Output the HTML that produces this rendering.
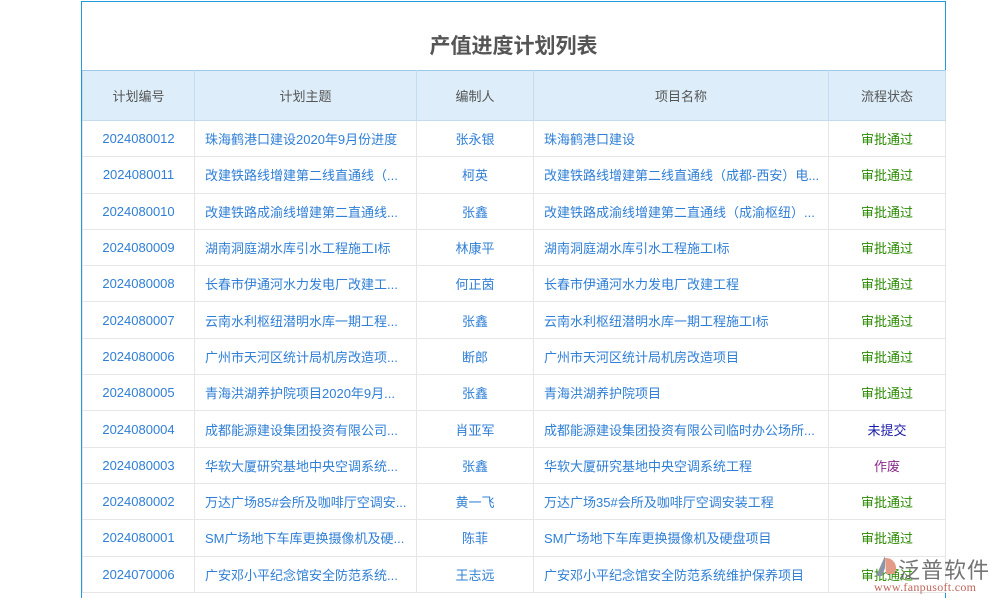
<!DOCTYPE html><html><head><meta charset="utf-8"><style>
body{margin:0;width:1000px;height:600px;background:#fff;font-family:"Liberation Sans","Noto Sans CJK SC",sans-serif;overflow:hidden;position:relative}
.box{position:absolute;left:81px;top:1px;width:863px;height:596px;border:1px solid #1e9be0;border-bottom:none;background:#fff}
.t{position:absolute;left:0;top:28px;width:100%;text-align:center;font-size:21px;font-weight:bold;color:#555}
table{position:absolute;left:0;top:68px;border-collapse:collapse;table-layout:fixed;width:863px}
th{height:49px;padding:0;background:#ddeefa;color:#555;font-weight:normal;font-size:13px;border:1px solid #c5dcee;border-top:1px solid #9cc9e8}
td{height:35.3px;border:1px solid #e6e6e6;color:#2f7fd6;font-size:13px;text-align:center;white-space:nowrap;overflow:hidden;padding:0}
td.l{text-align:left;padding-left:10px}
.g{color:#2a8a00}.b{color:#1a1aa8}.p{color:#8a2a8a}
.logo{position:absolute;left:898px;top:553px;font-size:22px;color:#666;letter-spacing:1px;opacity:.9}
.url{position:absolute;left:874px;top:580px;font-size:12px;color:#c0665a;font-family:"Liberation Serif",serif;letter-spacing:.3px}
</style></head><body>
<div class="box"><div class="t">产值进度计划列表</div>
<table><colgroup><col style="width:112px"><col style="width:222px"><col style="width:117px"><col style="width:295px"><col style="width:117px"></colgroup>
<tr><th>计划编号</th><th>计划主题</th><th>编制人</th><th>项目名称</th><th>流程状态</th></tr>
<tr><td>2024080012</td><td class="l">珠海鹤港口建设2020年9月份进度</td><td>张永银</td><td class="l">珠海鹤港口建设</td><td class="g">审批通过</td></tr>
<tr><td>2024080011</td><td class="l">改建铁路线增建第二线直通线（...</td><td>柯英</td><td class="l">改建铁路线增建第二线直通线（成都-西安）电...</td><td class="g">审批通过</td></tr>
<tr><td>2024080010</td><td class="l">改建铁路成渝线增建第二直通线...</td><td>张鑫</td><td class="l">改建铁路成渝线增建第二直通线（成渝枢纽）...</td><td class="g">审批通过</td></tr>
<tr><td>2024080009</td><td class="l">湖南洞庭湖水库引水工程施工I标</td><td>林康平</td><td class="l">湖南洞庭湖水库引水工程施工I标</td><td class="g">审批通过</td></tr>
<tr><td>2024080008</td><td class="l">长春市伊通河水力发电厂改建工...</td><td>何正茵</td><td class="l">长春市伊通河水力发电厂改建工程</td><td class="g">审批通过</td></tr>
<tr><td>2024080007</td><td class="l">云南水利枢纽潜明水库一期工程...</td><td>张鑫</td><td class="l">云南水利枢纽潜明水库一期工程施工I标</td><td class="g">审批通过</td></tr>
<tr><td>2024080006</td><td class="l">广州市天河区统计局机房改造项...</td><td>断郎</td><td class="l">广州市天河区统计局机房改造项目</td><td class="g">审批通过</td></tr>
<tr><td>2024080005</td><td class="l">青海洪湖养护院项目2020年9月...</td><td>张鑫</td><td class="l">青海洪湖养护院项目</td><td class="g">审批通过</td></tr>
<tr><td>2024080004</td><td class="l">成都能源建设集团投资有限公司...</td><td>肖亚军</td><td class="l">成都能源建设集团投资有限公司临时办公场所...</td><td class="b">未提交</td></tr>
<tr><td>2024080003</td><td class="l">华软大厦研究基地中央空调系统...</td><td>张鑫</td><td class="l">华软大厦研究基地中央空调系统工程</td><td class="p">作废</td></tr>
<tr><td>2024080002</td><td class="l">万达广场85#会所及咖啡厅空调安...</td><td>黄一飞</td><td class="l">万达广场35#会所及咖啡厅空调安装工程</td><td class="g">审批通过</td></tr>
<tr><td>2024080001</td><td class="l">SM广场地下车库更换摄像机及硬...</td><td>陈菲</td><td class="l">SM广场地下车库更换摄像机及硬盘项目</td><td class="g">审批通过</td></tr>
<tr><td>2024070006</td><td class="l">广安邓小平纪念馆安全防范系统...</td><td>王志远</td><td class="l">广安邓小平纪念馆安全防范系统维护保养项目</td><td class="g">审批通过</td></tr>
</table></div>
<svg style="position:absolute;left:872px;top:554px" width="26" height="26"><path d="M13 2 L4 22 L10 22 L13 14Z" fill="#8a95a5"/><path d="M13 4 A10 10 0 0 1 22 20 L14 20Z" fill="#e39a86"/></svg>
<div class="logo">泛普软件</div>
<div class="url">www.fanpusoft.com</div>
</body></html>
